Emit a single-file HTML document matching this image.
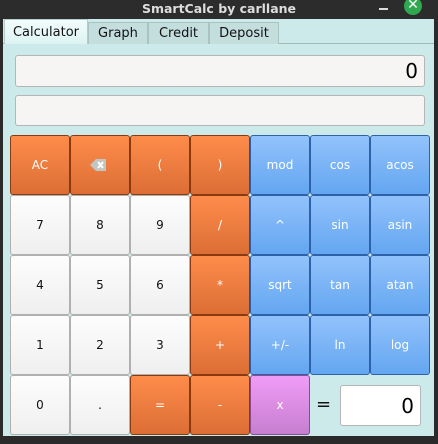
<!DOCTYPE html>
<html><head><style>
*{margin:0;padding:0;box-sizing:border-box}
body{width:438px;height:444px;background:#2a2a2a;font-family:"DejaVu Sans","Liberation Sans",sans-serif;position:relative;overflow:hidden}
.title{position:absolute;top:0;left:0;width:438px;height:19px;background:#2c2c2c;color:#ddd;font-size:12.5px;font-weight:bold;text-align:center;line-height:17px}
.min{position:absolute;left:379px;top:8px;width:9px;height:1.5px;background:#ddd}
.close{position:absolute;left:404px;top:-3px;width:18px;height:18px;border-radius:50%;background:#2fa84f;color:#fff;font-size:14px;text-align:center;line-height:17px}
.win{position:absolute;left:3px;top:19px;width:431px;height:417px;background:#cdeaea}
.tabline{position:absolute;left:3px;top:43px;width:431px;height:1px;background:#9fb8b8}
.tab{position:absolute;top:22px;height:22px;background:#c4dede;border:1px solid #a9c2c2;border-bottom:none;font-size:13px;color:#111;text-align:center;line-height:21px}
.tab.act{top:19px;height:25px;background:linear-gradient(#f2fcfc,#ddf3f3);border-color:#b4cccc;line-height:25px}
.disp{position:absolute;left:15px;width:410px;background:#f6f5f3;border:1px solid #b5b5b5;border-radius:3px}
.b{position:absolute;width:60px;height:60px;border-radius:3px;display:flex;align-items:center;justify-content:center;font-size:12px}
.o{background:linear-gradient(#fe8c4b,#dc6e35);border:1px solid #8a3a10;color:#fff}
.w{background:linear-gradient(#fdfdfd,#efefef);border:1px solid #b0b0b0;color:#111}
.u{background:linear-gradient(#92c2fb,#64a6f1);border:1px solid #2e62a8;color:#fff}
.p{background:linear-gradient(#f09cf6,#c67ed0);border:1px solid #8a4a90;color:#fff}
</style></head><body>
<div class="title">SmartCalc by carllane</div>
<div class="min"></div><div class="close">✕</div>
<div class="win"></div>
<div class="tabline"></div>
<div class="tab act" style="left:4px;width:84px">Calculator</div>
<div class="tab" style="left:88px;width:60px">Graph</div>
<div class="tab" style="left:148px;width:61px">Credit</div>
<div class="tab" style="left:209px;width:70px">Deposit</div>
<div class="disp" style="top:55px;height:32px;font-size:20px;text-align:right;padding-right:6px;line-height:30px">0</div>
<div class="disp" style="top:95px;height:31px"></div>

<div class="b o" style="left:10px;top:135px">AC</div>
<div class="b o" style="left:70px;top:135px"><svg width="20" height="12" viewBox="0 0 20 12"><path d="M0 6L6 0H16V12H6Z" fill="#c2c6c2"/><path d="M8 3L13 9M13 3L8 9" stroke="#fff" stroke-width="2"/></svg></div>
<div class="b o" style="left:130px;top:135px">(</div>
<div class="b o" style="left:190px;top:135px">)</div>
<div class="b u" style="left:250px;top:135px">mod</div>
<div class="b u" style="left:310px;top:135px">cos</div>
<div class="b u" style="left:370px;top:135px">acos</div>

<div class="b w" style="left:10px;top:195px">7</div>
<div class="b w" style="left:70px;top:195px">8</div>
<div class="b w" style="left:130px;top:195px">9</div>
<div class="b o" style="left:190px;top:195px">/</div>
<div class="b u" style="left:250px;top:195px">^</div>
<div class="b u" style="left:310px;top:195px">sin</div>
<div class="b u" style="left:370px;top:195px">asin</div>

<div class="b w" style="left:10px;top:255px">4</div>
<div class="b w" style="left:70px;top:255px">5</div>
<div class="b w" style="left:130px;top:255px">6</div>
<div class="b o" style="left:190px;top:255px">*</div>
<div class="b u" style="left:250px;top:255px">sqrt</div>
<div class="b u" style="left:310px;top:255px">tan</div>
<div class="b u" style="left:370px;top:255px">atan</div>

<div class="b w" style="left:10px;top:315px">1</div>
<div class="b w" style="left:70px;top:315px">2</div>
<div class="b w" style="left:130px;top:315px">3</div>
<div class="b o" style="left:190px;top:315px">+</div>
<div class="b u" style="left:250px;top:315px">+/-</div>
<div class="b u" style="left:310px;top:315px">ln</div>
<div class="b u" style="left:370px;top:315px">log</div>

<div class="b w" style="left:10px;top:375px">0</div>
<div class="b w" style="left:70px;top:375px">.</div>
<div class="b o" style="left:130px;top:375px">=</div>
<div class="b o" style="left:190px;top:375px">-</div>
<div class="b p" style="left:250px;top:375px">x</div>
<div style="position:absolute;left:316px;top:394px;font-size:18px;color:#111">=</div>
<div style="position:absolute;left:340px;top:385px;width:81px;height:41px;background:#fff;border:1px solid #b5b5b5;border-radius:3px;font-size:20px;text-align:right;padding-right:6px;line-height:40px">0</div>
</body></html>
